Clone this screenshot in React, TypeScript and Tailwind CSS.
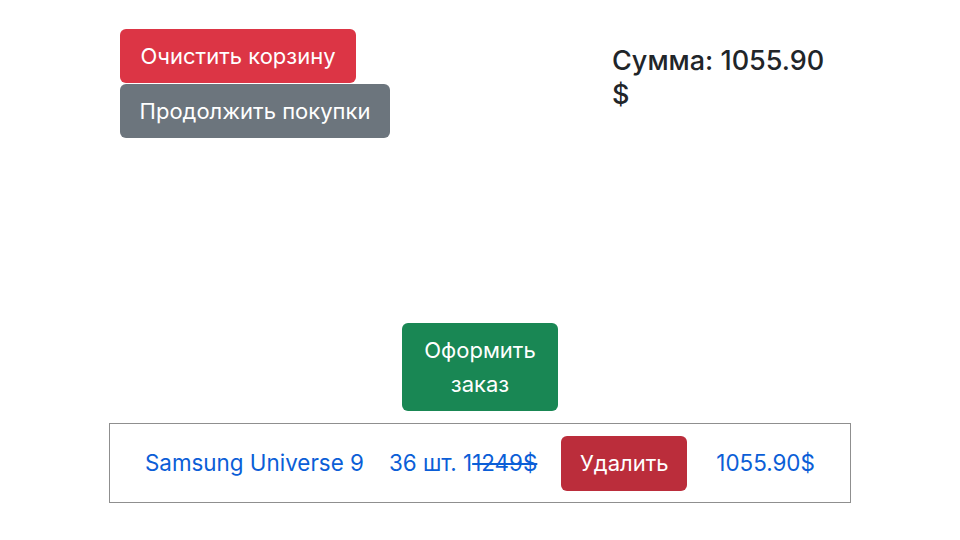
import React from "react";

const App = () => {
  return (
    <div
      className="w-[960px] h-[540px] bg-white text-[#212529] flex flex-col"
      style={{ fontFamily: "Inter, 'Noto Sans', sans-serif" }}
    >
      {/* Top controls */}
      <div className="flex pt-[29px] pl-[120px]">
        <div className="flex flex-col gap-px w-[492px] items-start">
          <button className="h-[54px] w-[236px] rounded-md bg-[#dc3545] text-white text-[22px]">
            Очистить корзину
          </button>
          <button className="h-[54px] w-[270px] rounded-md bg-[#6c757d] text-white text-[22px]">
            Продолжить покупки
          </button>
        </div>
        <div className="w-[235px] pt-[15px] text-[27px] leading-[34px] font-medium">
          Сумма: 1055.90 $
        </div>
      </div>

      {/* Order */}
      <button className="self-center mt-[185px] w-[156px] h-[88px] rounded-md bg-[#198754] text-white text-[22px] leading-[34px]">
        Оформить
        <br />
        заказ
      </button>

      {/* Cart row */}
      <div className="mt-[12px] ml-[109px] w-[742px] h-[80px] border border-[#8f8f8f] flex items-center pl-[35px] text-[22.4px] text-[#0b5ed7]">
        <span>Samsung Universe 9</span>
        <span className="ml-[25px]">
          36 шт. 1<s>1249$</s>
        </span>
        <button className="ml-[24px] w-[126px] h-[55px] rounded-md bg-[#bb2d3b] text-white text-[22px]">
          Удалить
        </button>
        <span className="ml-[29px]">1055.90$</span>
      </div>
    </div>
  );
};

export default App;
